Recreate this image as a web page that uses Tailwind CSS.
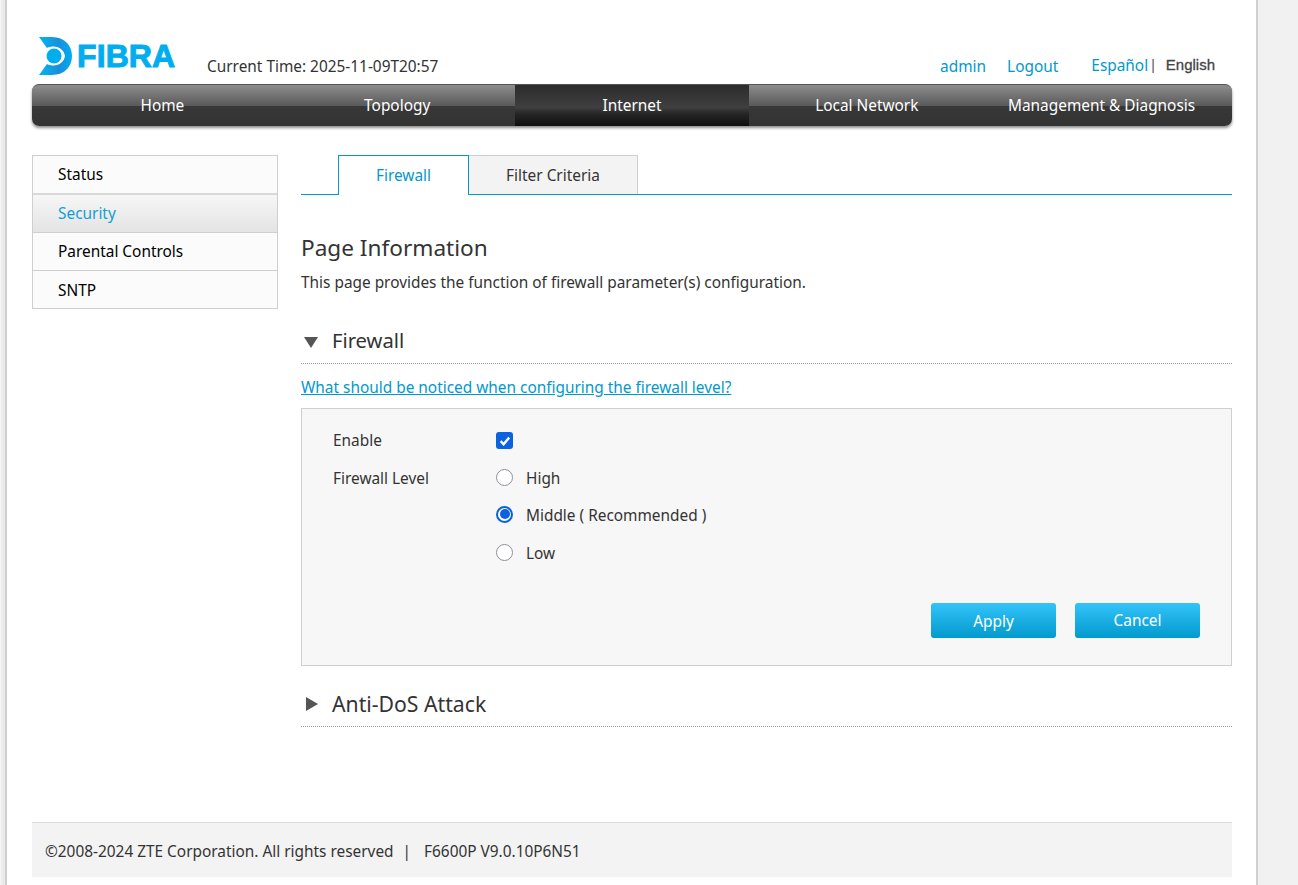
<!DOCTYPE html>
<html lang="en">
<head>
    <meta charset="UTF-8">
    <title>F6600P</title>
    <script src="https://cdn.jsdelivr.net/npm/@tailwindcss/browser@4"></script>
</head>
<body class="bg-[#f1f1f1] font-['Noto_Sans',sans-serif] text-[15.4px] text-[#333] overflow-hidden">
    <div class="w-[1298px] h-[885px] pl-[5px] overflow-hidden bg-[linear-gradient(90deg,#f6f6f6_0px,#e6e6e6_4px,#f1f1f1_5px)]">
        <div class="w-[1253px] h-[885px] bg-white border-x-2 border-[#cfcfcf] pl-[25px] pr-[24px]">
            <!--Header-->
            <div class="h-[84px] flex items-end w-[1200px] relative">
                <div class="w-[168px] h-[40px] mb-[8px] ml-[7px] flex items-center">
                    <svg width="34" height="38" viewBox="0 0 34 38" class="shrink-0">
                        <defs>
                            <linearGradient id="band" x1="0" y1="0" x2="1" y2="0">
                                <stop offset="0" stop-color="#00b6f2"/>
                                <stop offset="0.6" stop-color="#1a8fdc"/>
                                <stop offset="1" stop-color="#00aeef"/>
                            </linearGradient>
                        </defs>
                        <path d="M0 0 H13 C26 0 33 9 33 19 C33 29 26 38 13 38 H0 L8 27 C14 30 24 29 26 19 C24 9 14 8 8 11 Z" fill="url(#band)"/>
                        <circle cx="15" cy="19" r="7.5" fill="#00aeef"/>
                    </svg>
                    <span class="font-['Liberation_Sans',sans-serif] font-bold text-[32px] tracking-[0.1px] [-webkit-text-stroke:1px_#00aeef] text-[#00aeef] leading-none ml-[4px]">FIBRA</span>
                </div>
                <div class="mb-[6px] text-[#333]">Current Time: 2025-11-09T20:57</div>
                <div class="ml-auto mb-[6px] flex items-center text-[#0099cc]">
                    <a>admin</a>
                    <a class="ml-[21px]">Logout</a>
                    <a class="ml-[33px] -mt-[2px]">Español</a>
                    <span class="font-['Liberation_Sans',sans-serif] text-[14px] text-[#555] ml-[3px] -mt-[1px]">|</span>
                    <a class="ml-[11px] mr-[17px] -mt-[3px] font-['Liberation_Sans',sans-serif] text-[15px] text-[#444] [-webkit-text-stroke:0.3px_#444]">English</a>
                </div>
            </div>
            <!--Menu-->
            <div class="w-[1200px] h-[42px] rounded-[7px] border-t border-[#555] bg-[linear-gradient(#8d8d8d_0%,#5a5a5a_50%,#383838_51%,#333_100%)] shadow-[0_2px_3px_rgba(0,0,0,0.45)] px-[13px] flex text-white overflow-hidden">
                <a class="w-[235px] flex items-center justify-center">Home</a>
                <a class="w-[235px] flex items-center justify-center">Topology</a>
                <a class="w-[235px] flex items-center justify-center bg-[linear-gradient(#2c2c2c,#3f3f3f_55%,#262626_70%,#0f0f0f)]">Internet</a>
                <a class="w-[235px] flex items-center justify-center">Local Network</a>
                <a class="w-[235px] flex items-center justify-center">Management &amp; Diagnosis</a>
            </div>
            <div class="flex mt-[29px]">
                <!--Sidebar-->
                <div class="w-[246px] h-[154px] border border-[#cfcfcf] text-black bg-[#fbfbfb] shrink-0">
                    <div class="h-[39px] pl-[25px] pt-[1px] flex items-center border-b-2 border-[#d8d8d8]">Status</div>
                    <div class="h-[38px] pl-[25px] flex items-center border-b border-[#cfcfcf] text-[#0f9fd4] bg-[linear-gradient(#f6f6f6,#e4e4e4)]">Security</div>
                    <div class="h-[38px] pl-[25px] flex items-center border-b border-[#cfcfcf]">Parental Controls</div>
                    <div class="h-[37px] pl-[25px] pt-[2px] flex items-center">SNTP</div>
                </div>
                <!--Content-->
                <div class="w-[931px] ml-[23px]">
                    <div class="h-[40px] flex border-b border-[#0099cc] pl-[37px]">
                        <div class="w-[131px] h-[40px] bg-white border border-b-0 border-[#0099cc] text-[#0099cc] flex items-center justify-center">Firewall</div>
                        <div class="w-[169px] h-[39px] pt-[2px] bg-[#f3f3f3] border-t border-r border-[#cfcfcf] flex items-center justify-center">Filter Criteria</div>
                    </div>
                    <h1 class="text-[22.6px] leading-[32px] mt-[37px]">Page Information</h1>
                    <p class="mt-[8px] leading-[22px]">This page provides the function of firewall parameter(s) configuration.</p>
                    <div class="h-[44px] mt-[26px] flex items-center border-b border-dotted border-[#999]">
                        <svg width="14" height="12" viewBox="0 0 14 12" class="ml-[3px]"><path d="M0 1 H14 L7 12 Z" fill="#555"/></svg>
                        <span class="text-[20.2px] ml-[14px] -mt-[2px]">Firewall</span>
                    </div>
                    <a class="block mt-[13px] leading-[22px] text-[#0099cc] underline">What should be noticed when configuring the firewall level?</a>
                    <div class="mt-[9px] h-[258px] bg-[#f7f7f7] border border-[#cfcfcf] pl-[31px] pr-[31px] pt-[13px]">
                        <div class="flex items-center h-[37px]">
                            <span class="w-[163px]">Enable</span>
                            <span class="w-[17px] h-[17px] rounded-[3px] bg-[#0a62e0] flex items-center justify-center">
                                <svg width="14" height="14" viewBox="0 0 14 14"><path d="M2.6 7.2 L5.6 10.2 L11.2 3.6" fill="none" stroke="white" stroke-width="2.4"/></svg>
                            </span>
                        </div>
                        <div class="flex items-center h-[36px]">
                            <span class="w-[163px] mt-[4px]">Firewall Level</span>
                            <span class="w-[17px] h-[17px] rounded-full bg-white border border-[#8f8f9d]"></span>
                            <span class="ml-[13px] mt-[4px]">High</span>
                        </div>
                        <div class="flex items-center h-[38px] pl-[163px]">
                            <span class="w-[17px] h-[17px] rounded-full bg-white border-2 border-[#0a62e0] flex items-center justify-center"><span class="w-[10px] h-[10px] rounded-full bg-[#0a62e0]"></span></span>
                            <span class="ml-[13px] mt-[4px]">Middle ( Recommended )</span>
                        </div>
                        <div class="flex items-center h-[38px] pl-[163px]">
                            <span class="w-[17px] h-[17px] rounded-full bg-white border border-[#8f8f9d]"></span>
                            <span class="ml-[13px] mt-[4px]">Low</span>
                        </div>
                        <div class="flex justify-end gap-[19px] mt-[32px]">
                            <button class="w-[125px] h-[35px] pt-[2px] rounded-[3px] text-white bg-[linear-gradient(#33c3fa,#029acd)]">Apply</button>
                            <button class="w-[125px] h-[35px] rounded-[3px] text-white bg-[linear-gradient(#33c3fa,#029acd)]">Cancel</button>
                        </div>
                    </div>
                    <div class="h-[45px] mt-[16px] flex items-center border-b border-dotted border-[#999]">
                        <svg width="12" height="14" viewBox="0 0 12 14" class="ml-[5px]"><path d="M0 0 V14 L12 7 Z" fill="#555"/></svg>
                        <span class="text-[21.2px] ml-[14px]">Anti-DoS Attack</span>
                    </div>
                </div>
            </div>
            <!--Footer-->
            <div class="absolute left-[32px] top-[822px] w-[1200px] h-[55px] bg-[#f3f3f3] border-t border-[#dcdcdc] pl-[13px] pt-[3px] flex items-center">
                ©2008-2024 ZTE Corporation. All rights reserved<span class="mx-[9px]">|</span><span class="ml-[4px]">F6600P V9.0.10P6N51</span>
            </div>
        </div>
    </div>
</body>
</html>
